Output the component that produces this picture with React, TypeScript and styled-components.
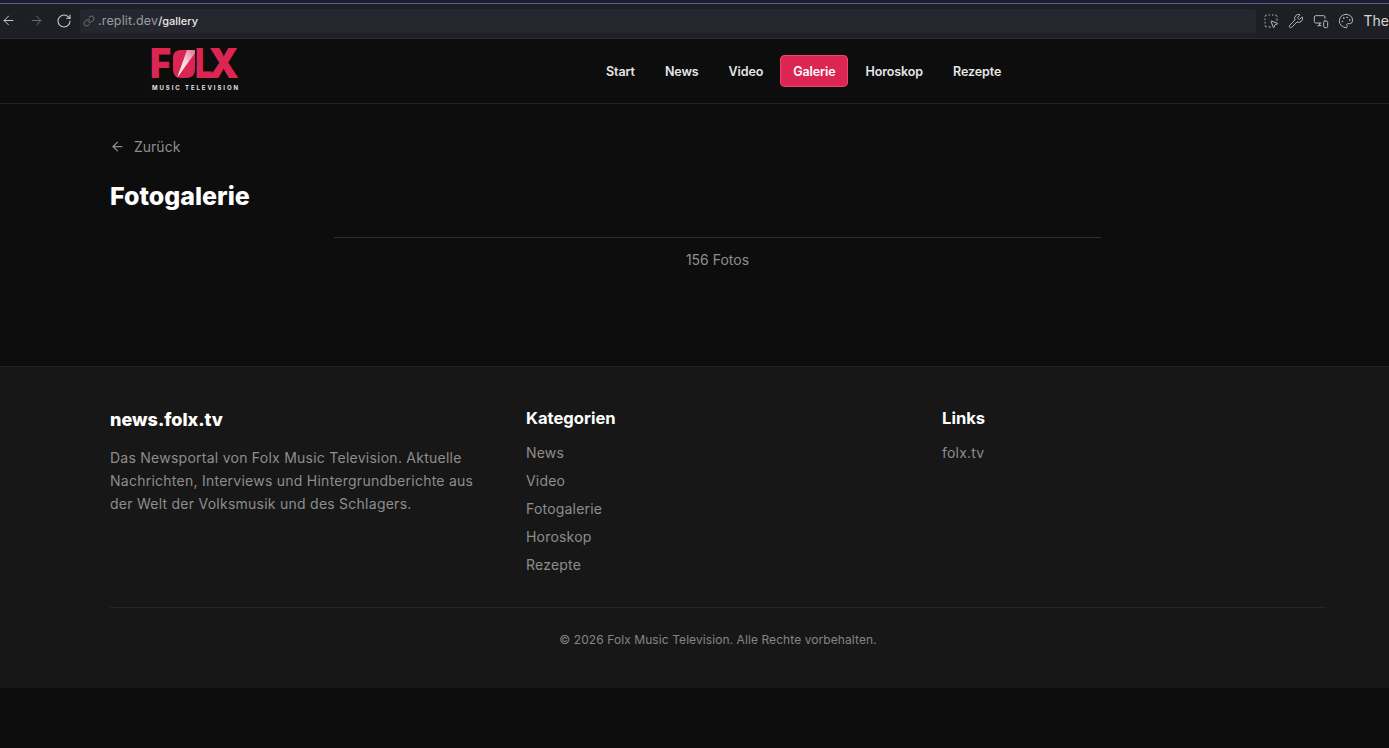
import React from "react";
import styled, { createGlobalStyle } from "styled-components";
import { ArrowLeft, ArrowRight, RotateCw, Link, Wrench, MonitorSmartphone, Palette, SquareDashedMousePointer } from "lucide-react";

const FONT = `"Inter", "Liberation Sans", sans-serif`;

const GlobalStyle = createGlobalStyle`
  html, body { margin: 0; padding: 0; background: #0c0c0d; }
  body { font-family: ${FONT}; height: 748px; overflow: hidden; }
  * { box-sizing: border-box; }
`;

const Chrome = styled.div`
  height: 39px;
  background: #1e1f25;
  border-bottom: 1px solid #2c2d33;
  position: relative;
  display: flex;
  align-items: center;
  padding-top: 3px;
  overflow: hidden;
  &::before {
    content: "";
    position: absolute;
    left: 0;
    right: 0;
    top: 3px;
    height: 1px;
    background: #5d57b0;
  }
`;

const ChromeNav = styled.div`
  display: flex;
  align-items: center;
  margin-left: -6px;
`;

const ChromeIcon = styled.span<{ $dim?: boolean }>`
  width: 28px;
  height: 22px;
  display: flex;
  align-items: center;
  justify-content: center;
  color: ${(p) => (p.$dim ? "#6a6b70" : "#c9cacd")};
`;

const UrlBar = styled.div`
  flex: 1;
  height: 24px;
  margin-left: 2px;
  background: #26272e;
  border-radius: 4px;
  display: flex;
  align-items: center;
  gap: 3px;
  padding-left: 3px;
  font-size: 12.5px;
  letter-spacing: 0.15px;
  color: #9a9ba0;
`;

const UrlPath = styled.b`
  color: #e8e8ea;
  font-size: 11px;
  letter-spacing: 0;
  font-weight: 500;
`;

const ChromeTools = styled.div`
  display: flex;
  align-items: center;
  width: 133px;
  flex: none;
  padding-left: 3px;
`;

const ToolIcon = styled.span`
  width: 26px;
  height: 22px;
  display: flex;
  align-items: center;
  justify-content: center;
  color: #b4b5b9;
`;

const ToolTitle = styled.span`
  font-size: 14px;
  color: #d5d6d8;
  margin-left: 5px;
`;

const Header = styled.header`
  height: 65px;
  border-bottom: 1px solid #232325;
  display: flex;
  align-items: center;
  padding-left: 151px;
  background: #0d0d0e;
`;

const LogoBox = styled.div`
  width: 92px;
  height: 52px;
  margin-bottom: 11px;
  flex: none;
`;

const LogoSvg = styled.svg`
  display: block;
  overflow: visible;
`;

const Nav = styled.nav`
  display: flex;
  align-items: center;
  gap: 4px;
  margin-left: 350px;
`;

const NavItem = styled.a<{ $active?: boolean }>`
  height: 32px;
  padding: 0 13px;
  display: flex;
  align-items: center;
  font-size: 12.5px;
  letter-spacing: -0.1px;
  font-weight: 600;
  border-radius: 5px;
  color: ${(p) => (p.$active ? "#fff" : "#e6e6e6")};
  background: ${(p) => (p.$active ? "#dc2552" : "transparent")};
  box-shadow: ${(p) => (p.$active ? "inset 0 0 0 1px #e8476e" : "none")};
`;

const Main = styled.main`
  height: 262px;
  padding: 32px 63px 0 110px;
  background: #0d0d0e;
`;

const Back = styled.a`
  display: flex;
  align-items: center;
  gap: 9px;
  color: #8d8d8f;
  font-size: 14px;
  height: 20px;
`;

const Title = styled.h1`
  margin: 25px 0 0;
  color: #fff;
  font-size: 25px;
  font-weight: 800;
  line-height: 30px;
`;

const Counter = styled.div`
  width: 767px;
  margin: 26px 0 0 224px;
  border-top: 1px solid #2f2f31;
  padding-top: 13px;
  text-align: center;
  font-size: 14px;
  line-height: 18px;
  color: #8a8f8f;
`;

const Footer = styled.footer`
  height: 322px;
  background: #171717;
  border-top: 1px solid #232325;
  padding: 39px 63px 0 110px;
`;

const Columns = styled.div`
  display: grid;
  grid-template-columns: repeat(3, 384px);
  column-gap: 32px;
  height: 201px;
`;

const Brand = styled.h3`
  margin: 2px 0 0;
  color: #fff;
  font-size: 18px;
  line-height: 24px;
  font-weight: 800;
`;

const Blurb = styled.p`
  margin: 14px 0 0;
  color: #8d8d8d;
  font-size: 14px;
  letter-spacing: 0.25px;
  line-height: 23px;
`;

const ColTitle = styled.h4`
  margin: 0;
  color: #fff;
  font-size: 16.6px;
  line-height: 24px;
  font-weight: 700;
`;

const LinkList = styled.ul`
  list-style: none;
  margin: 13px 0 0;
  padding: 0;
  display: flex;
  flex-direction: column;
  gap: 8px;
`;

const LinkItem = styled.li`
  color: #8d8d8d;
  font-size: 14px;
  letter-spacing: 0.2px;
  line-height: 20px;
`;

const Copy = styled.div`
  border-top: 1px solid #262628;
  padding-top: 24px;
  text-align: center;
  color: #858585;
  font-size: 12px;
  letter-spacing: 0.08px;
  line-height: 16px;
`;

const Logo = () => (
  <LogoSvg width="92" height="52" viewBox="0 0 92 52">
    <defs>
      <clipPath id="logoO">
        <path d="M30 10 H44 V29 Q44 38 35 38 H30 Q22 38 22 29 V18 Q22 10 30 10Z" />
      </clipPath>
      <linearGradient id="logoShine" x1="0" y1="1" x2="1" y2="0">
        <stop offset="0" stopColor="#ffffff" />
        <stop offset="0.5" stopColor="#f8dbe2" />
        <stop offset="1" stopColor="#e4708d" />
      </linearGradient>
    </defs>
    <text x="-1" y="38" fontFamily="Inter, sans-serif" fontWeight="900" fontSize="41" fill="#dc2552" textLength="21" lengthAdjust="spacingAndGlyphs">F</text>
    <g clipPath="url(#logoO)">
      <rect x="21" y="9" width="24" height="30" fill="#dc2552" />
      <polygon points="26,38 36,10 44,10 44,13" fill="url(#logoShine)" />
    </g>
    <text x="44" y="38" fontFamily="Inter, sans-serif" fontWeight="900" fontSize="41" fill="#dc2552" textLength="18" lengthAdjust="spacingAndGlyphs">L</text>
    <text x="57" y="38" fontFamily="Inter, sans-serif" fontWeight="900" fontSize="41" fill="#dc2552" textLength="31" lengthAdjust="spacingAndGlyphs">X</text>
    <text x="1" y="50" fontFamily="Inter, sans-serif" fontWeight="700" fontSize="6" fill="#e2e2e2" textLength="86">MUSIC TELEVISION</text>
  </LogoSvg>
);

export default function App() {
  return (
    <>
      <GlobalStyle />
      <Chrome>
        <ChromeNav>
          <ChromeIcon><ArrowLeft size={15} strokeWidth={1.6} /></ChromeIcon>
          <ChromeIcon $dim><ArrowRight size={15} strokeWidth={1.6} /></ChromeIcon>
          <ChromeIcon><RotateCw size={16} strokeWidth={1.6} /></ChromeIcon>
        </ChromeNav>
        <UrlBar>
          <Link size={12} color="#77787d" />
          <span>.replit.dev<UrlPath>/gallery</UrlPath></span>
        </UrlBar>
        <ChromeTools>
          <ToolIcon><SquareDashedMousePointer size={16} strokeWidth={1.5} /></ToolIcon>
          <ToolIcon><Wrench size={16} strokeWidth={1.5} /></ToolIcon>
          <ToolIcon><MonitorSmartphone size={16} strokeWidth={1.5} /></ToolIcon>
          <ToolIcon><Palette size={16} strokeWidth={1.5} /></ToolIcon>
          <ToolTitle>The</ToolTitle>
        </ChromeTools>
      </Chrome>
      <Header>
        <LogoBox><Logo /></LogoBox>
        <Nav>
          <NavItem>Start</NavItem>
          <NavItem>News</NavItem>
          <NavItem>Video</NavItem>
          <NavItem $active>Galerie</NavItem>
          <NavItem>Horoskop</NavItem>
          <NavItem>Rezepte</NavItem>
        </Nav>
      </Header>
      <Main>
        <Back><ArrowLeft size={15} strokeWidth={2} /> Zurück</Back>
        <Title>Fotogalerie</Title>
        <Counter>156 Fotos</Counter>
      </Main>
      <Footer>
        <Columns>
          <div>
            <Brand>news.folx.tv</Brand>
            <Blurb>
              Das Newsportal von Folx Music Television. Aktuelle Nachrichten, Interviews und Hintergrundberichte aus der Welt der Volksmusik und des Schlagers.
            </Blurb>
          </div>
          <div>
            <ColTitle>Kategorien</ColTitle>
            <LinkList>
              <LinkItem>News</LinkItem>
              <LinkItem>Video</LinkItem>
              <LinkItem>Fotogalerie</LinkItem>
              <LinkItem>Horoskop</LinkItem>
              <LinkItem>Rezepte</LinkItem>
            </LinkList>
          </div>
          <div>
            <ColTitle>Links</ColTitle>
            <LinkList>
              <LinkItem>folx.tv</LinkItem>
            </LinkList>
          </div>
        </Columns>
        <Copy>© 2026 Folx Music Television. Alle Rechte vorbehalten.</Copy>
      </Footer>
    </>
  );
}
